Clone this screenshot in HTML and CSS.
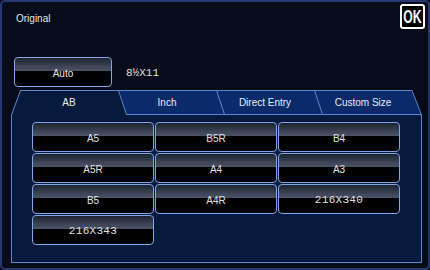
FILE: index.html
```html
<!DOCTYPE html>
<html>
<head>
<meta charset="utf-8">
<link rel="stylesheet" href="styles.css">
</head>
<body>
<div class="window">
  <div class="header">
    <span class="title">Original</span>
    <div class="ok"><span>OK</span></div>
  </div>
  <div class="auto-row">
    <div class="btn auto">Auto</div>
    <span class="current">8½X11</span>
  </div>
  <div class="tabs">
    <svg class="tab-shapes" width="411" height="25" viewBox="0 0 411 25">
      <polygon points="0,25 9,0 108,0 116,25" fill="#061a3e"/>
      <polygon points="108,0 401,0 410,24.5 116,24.5" fill="#0b2a6a"/>
      <path d="M0.5 25 L9.5 0.5 H401 L410.5 25 M107.5 0.5 L115.5 24.5 M205.5 0.5 L213.5 24.5 M303.5 0.5 L311.5 24.5 M115 24.5 H411" fill="none" stroke="#5f85cc" stroke-width="1"/>
    </svg>
    <div class="tab-labels">
      <span class="tab">AB</span>
      <span class="tab">Inch</span>
      <span class="tab">Direct Entry</span>
      <span class="tab">Custom Size</span>
    </div>
  </div>
  <div class="panel">
    <div class="grid">
      <div class="btn size">A5</div>
      <div class="btn size">B5R</div>
      <div class="btn size">B4</div>
      <div class="btn size">A5R</div>
      <div class="btn size">A4</div>
      <div class="btn size">A3</div>
      <div class="btn size">B5</div>
      <div class="btn size">A4R</div>
      <div class="btn size mono">216X340</div>
      <div class="btn size mono">216X343</div>
    </div>
  </div>
</div>
</body>
</html>
```

FILE: styles.css
```css
* {
  box-sizing: border-box;
  margin: 0;
  padding: 0;
}

html,
body {
  background: #070a18;
}

body {
  width: 430px;
  height: 270px;
  overflow: hidden;
  font-family: "Liberation Sans", Arial, sans-serif;
}

.window {
  width: 430px;
  height: 270px;
  border: 2px solid #26386f;
  border-radius: 5px;
  background: #070b1a;
}

.header {
  display: flex;
  justify-content: space-between;
  align-items: flex-start;
  height: 27px;
  padding: 2px 3px 0 14px;
}

.title {
  font-size: 10px;
  line-height: 12px;
  margin-top: 9px;
  color: #e4e6ec;
}

.ok {
  width: 25px;
  height: 25px;
  border: 2px solid #ffffff;
  border-radius: 3px;
  background: #000000;
  display: flex;
  align-items: center;
  justify-content: center;
}

.ok span {
  display: inline-block;
  font-weight: bold;
  font-size: 18px;
  line-height: 1;
  color: #ffffff;
  transform: scaleX(0.68);
}

.auto-row {
  display: flex;
  align-items: center;
  gap: 14px;
  margin-top: 28px;
  padding-left: 12px;
}

.btn {
  border: 1px solid #80a6ea;
  border-radius: 4px;
  background: linear-gradient(#1c2230 0%, #3c4456 30%, #4c5568 47%, #000000 48%, #000000 100%);
  color: #e2e2e2;
  font-size: 10px;
  display: flex;
  align-items: center;
  justify-content: center;
}

.auto {
  width: 98px;
  height: 30px;
  padding-top: 2px;
}

.current {
  font-family: "Liberation Mono", monospace;
  font-size: 11px;
  color: #e0e0e0;
  padding-top: 2px;
}

.tabs {
  position: relative;
  width: 411px;
  height: 25px;
  margin: 3px 0 0 9px;
}

.tab-shapes {
  position: absolute;
  left: 0;
  top: 0;
}

.tab-labels {
  position: relative;
  display: flex;
  height: 100%;
  padding-left: 9px;
}

.tab {
  width: 98px;
  display: flex;
  align-items: center;
  justify-content: center;
  font-size: 10px;
  color: #e8ecf4;
}

.panel {
  width: 411px;
  height: 148px;
  margin-left: 9px;
  border: 1px solid #5f85cc;
  border-top: 0;
  background: #061a3e;
  padding: 7px 0 0 20px;
}

.grid {
  display: grid;
  grid-template-columns: repeat(3, 122px);
  grid-auto-rows: 30px;
  gap: 1px;
}

.size {
  padding-top: 2px;
}

.mono {
  font-family: "Liberation Mono", monospace;
  font-size: 11px;
  letter-spacing: 0.3px;
}
```
